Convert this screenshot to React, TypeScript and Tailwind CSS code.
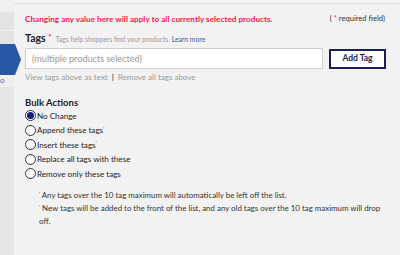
import React from 'react';

const options = [
  { label: 'No Change', mark: false, checked: true },
  { label: 'Append these tags', mark: true, checked: false },
  { label: 'Insert these tags', mark: true, checked: false },
  { label: 'Replace all tags with these', mark: false, checked: false },
  { label: 'Remove only these tags', mark: false, checked: false },
];

export default function App() {
  return (
    <div className="w-[400px] h-[255px] overflow-hidden bg-[#f2f2f2] flex font-['Lato',sans-serif] text-[#222]">
      {/* Sidebar */}
      <div className="w-[14px] shrink-0 flex flex-col bg-[#e6e6e6] relative">
        <div className="h-[12px] bg-[#efefef]" />
        <div className="h-[19px] bg-[#e3e3e3] border-b border-[#f2f2f2]" />
        <div className="h-[13px] bg-[#e3e3e3]" />
        <div className="h-[31px] relative">
          <div className="absolute left-0 top-0 w-[21px] h-[31px] bg-[#2857a4] [clip-path:polygon(0_0,15px_0,21px_50%,15px_100%,0_100%)]" />
        </div>
        <div className="h-[12px] bg-[#efefef] text-[#3b6bb5] text-[8px] leading-[10px] overflow-hidden">o</div>
        <div className="flex-1 bg-[#e6e6e6]" />
      </div>

      {/* Main */}
      <div className="flex-1 flex flex-col pl-[11px] pr-[14px] border-t border-[#e0e0e0] mt-[3px]">
        <div className="flex justify-between items-center mt-[9px]">
          <p className="text-[8.2px] font-bold text-[#f51a4d]">
            Changing any value here will apply to all currently selected products.
          </p>
          <p className="text-[7.6px] text-[#333] mr-[1px]">
            ( <span className="text-[#f51a4d]">*</span> required field)
          </p>
        </div>

        <div className="flex items-baseline gap-[4px] mt-[6px]">
          <span className="text-[10.5px] font-bold text-[#222]">
            Tags <span className="text-[#f51a4d] text-[8px] align-top">*</span>
          </span>
          <span className="text-[6.8px] text-[#999]">
            Tags help shoppers find your products. <span className="text-[#2e5ea8]">Learn more</span>
          </span>
        </div>

        <div className="flex items-center gap-[6px] mt-[1px]">
          <div className="w-[298px] h-[21px] bg-white border border-[#cfcfcf] flex items-center pl-[6px] text-[9.1px] text-[#999]">
            (multiple products selected)
          </div>
          <button className="w-[57px] h-[20px] bg-white border-2 border-[#1e1e5a] text-[#1e1e5a] text-[8.5px] font-bold">
            Add Tag
          </button>
        </div>

        <div className="flex items-center gap-[4px] mt-[2px] text-[8px] text-[#999]">
          <span>View tags above as text</span>
          <span className="text-[#555] font-bold">|</span>
          <span>Remove all tags above</span>
        </div>

        <h3 className="text-[9.5px] font-bold text-[#222] mt-[13px]">Bulk Actions</h3>

        <div className="flex flex-col gap-[3.5px]">
          {options.map((o) => (
            <label key={o.label} className="flex items-center gap-[1px] text-[8.1px] text-[#222] h-[11px]">
              <span className="w-[11px] h-[11px] rounded-full border border-[#333] bg-white flex items-center justify-center">
                {o.checked && <span className="w-[7px] h-[7px] rounded-full bg-[#1a1a80]" />}
              </span>
              <span>
                {o.label}
                {o.mark && <sup className="text-[5px]">'</sup>}
              </span>
            </label>
          ))}
        </div>

        <div className="ml-[14px] mt-[10px] text-[7.9px] leading-[13px] text-[#333]">
          <p><sup className="text-[5px]">'</sup> Any tags over the 10 tag maximum will automatically be left off the list.</p>
          <p><sup className="text-[5px]">'</sup> New tags will be added to the front of the list, and any old tags over the 10 tag maximum will drop off.</p>
        </div>
      </div>
    </div>
  );
}
